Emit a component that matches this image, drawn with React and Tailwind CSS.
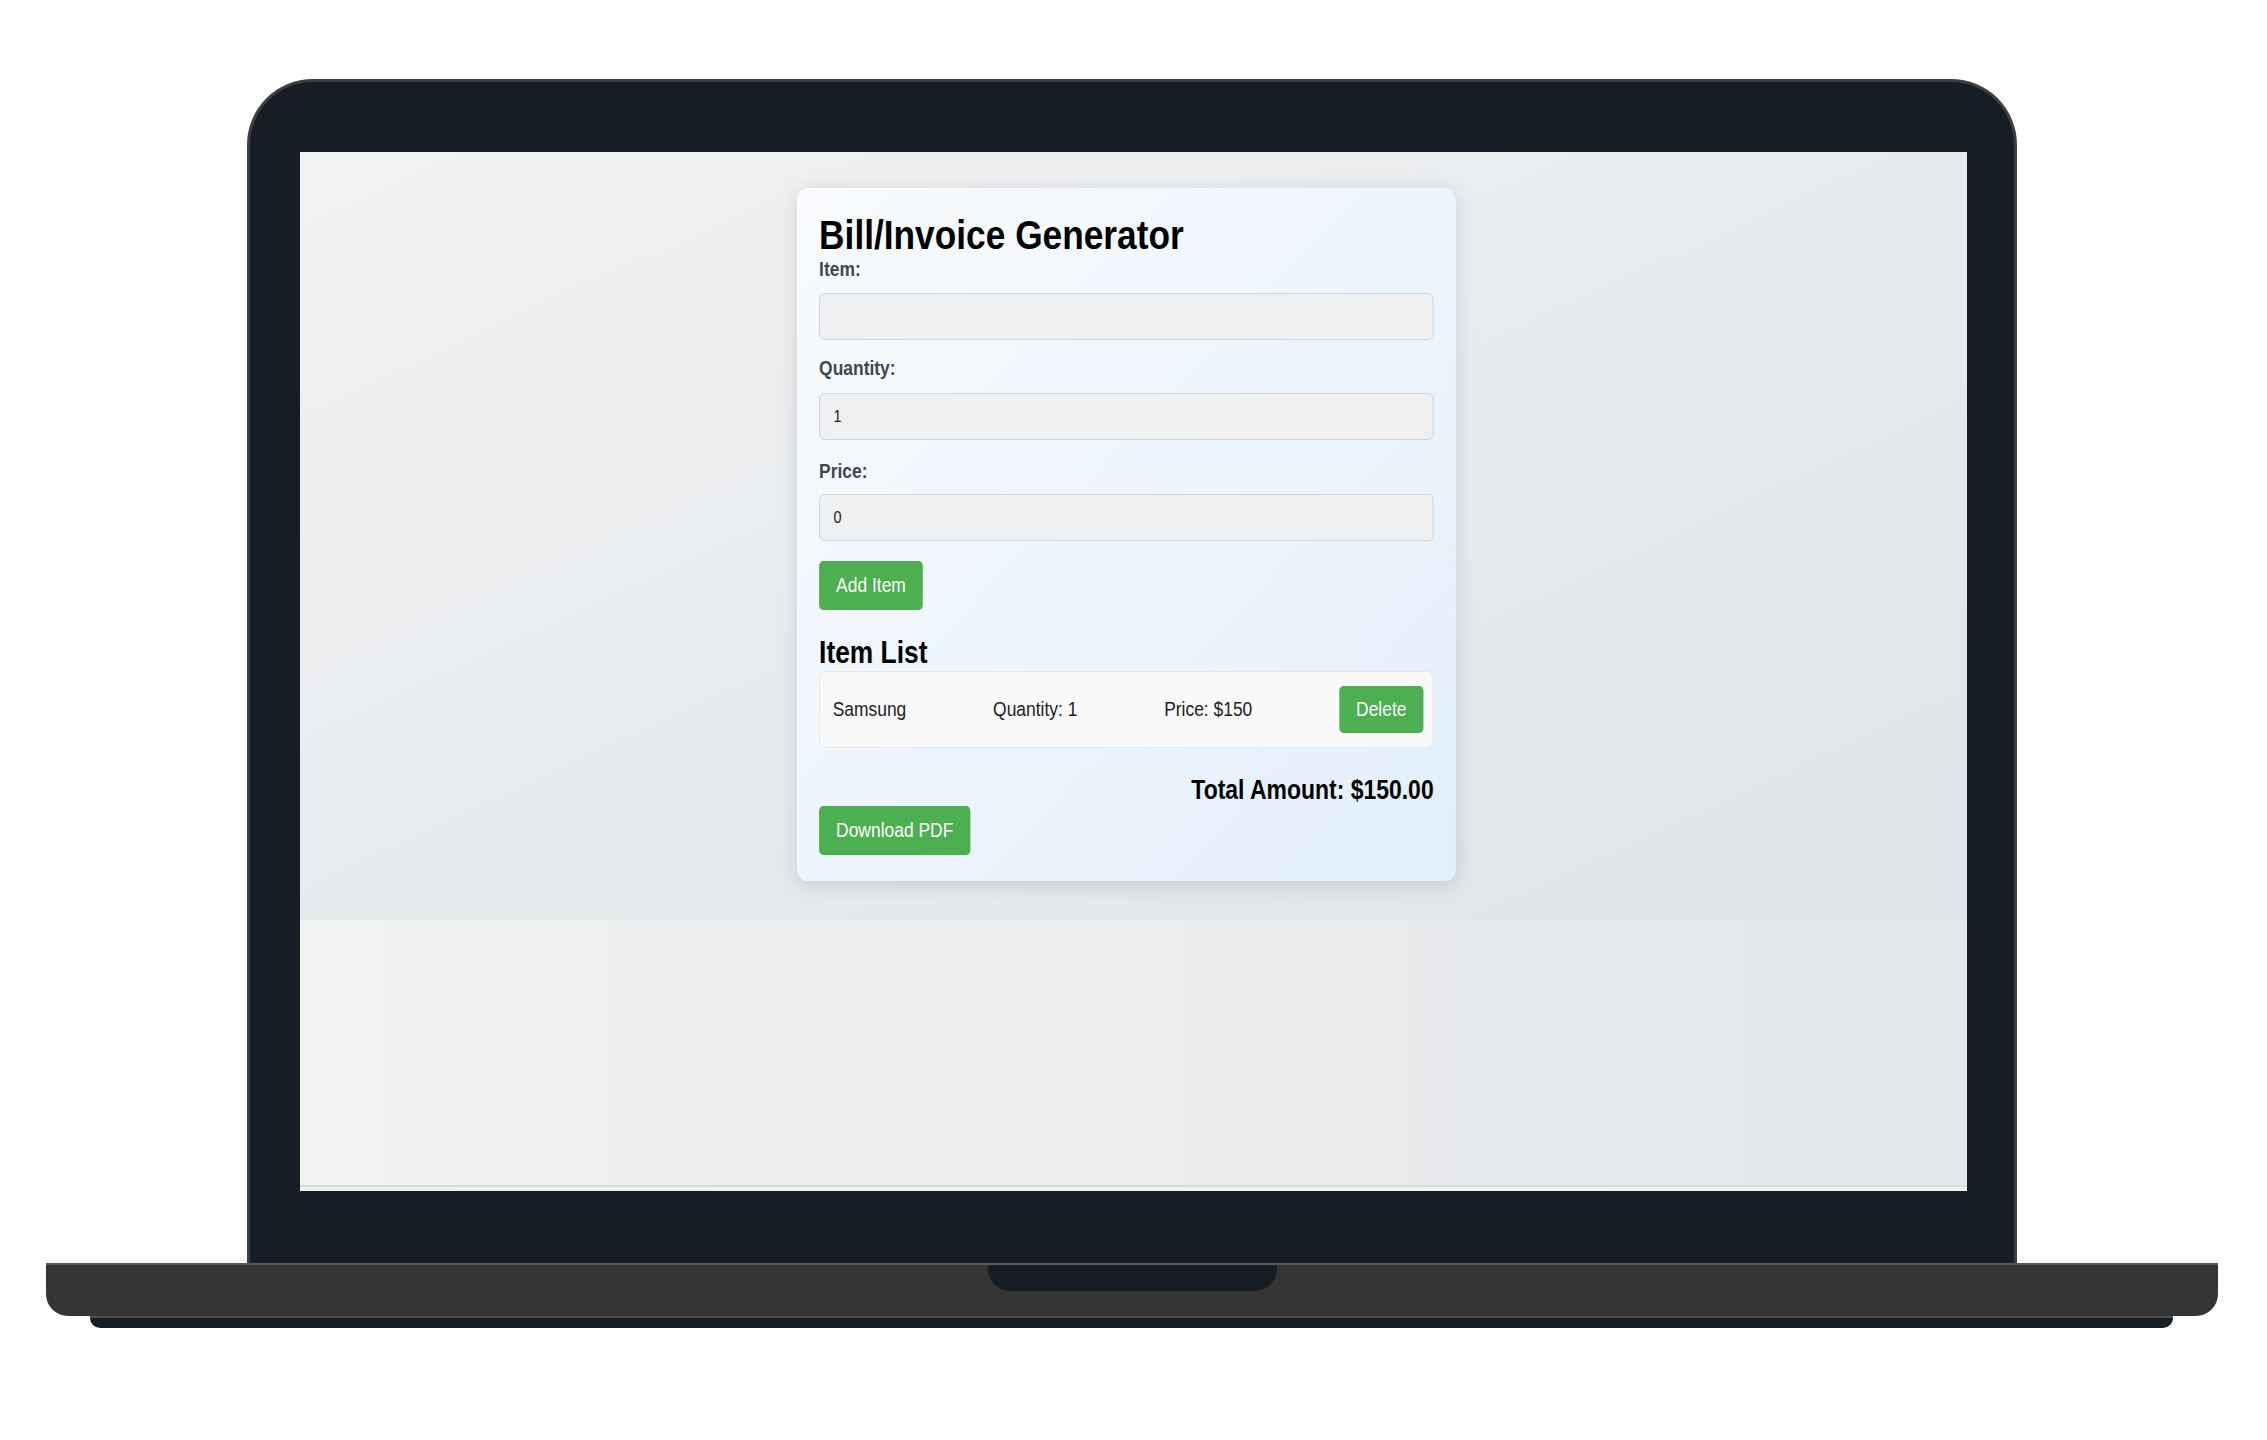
import React from "react";

const items = [{ name: "Samsung", quantity: 1, price: 150 }];

const Field = ({ label, value, labelGap, inputGap }) => (
  <div>
    <label
      className={`block text-[20.5px] leading-[24px] font-bold text-[#3f4753] ${labelGap}`}
    >
      {label}
    </label>
    <input
      readOnly
      value={value}
      className={`${inputGap} block w-full h-[47px] rounded-[6px] border-[1.5px] border-[#cdd2d6] bg-[#eef0f1] pl-[16px] text-[17px] text-[#222] outline-none font-['Liberation_Sans',Arial,sans-serif]`}
    />
  </div>
);

const GreenButton = ({ children, className = "" }) => (
  <button
    className={`h-[49px] px-5 rounded-[5px] bg-[#4caf50] text-white text-[20.5px] leading-none ${className}`}
  >
    {children}
  </button>
);

const InvoiceCard = () => {
  const total = items.reduce((sum, i) => sum + i.quantity * i.price, 0);

  return (
    <div className="ml-[497px] w-[775px] scale-x-[0.85] origin-left rounded-[12px] bg-linear-to-br from-[#f9fbfd] to-[#e2effb] px-[26px] pt-[26px] pb-[26px] shadow-[0_4px_22px_rgba(0,0,0,0.13)] font-['Liberation_Sans',Arial,sans-serif]">
      <h1 className="text-[41.5px] leading-[41px] font-bold text-black">
        Bill/Invoice Generator
      </h1>
      <Field label="Item:" value="" labelGap="mt-[2px]" inputGap="mt-[12px]" />
      <Field label="Quantity:" value="1" labelGap="mt-[16px]" inputGap="mt-[13px]" />
      <Field label="Price:" value="0" labelGap="mt-[19px]" inputGap="mt-[11px]" />
      <GreenButton className="mt-[20px]">Add Item</GreenButton>

      <h2 className="mt-[27px] text-[31px] leading-[31px] font-bold text-black">
        Item List
      </h2>
      {items.map((item) => (
        <div
          key={item.name}
          className="mt-[3px] h-[77px] flex items-center justify-between rounded-[8px] border-[1.5px] border-[#e2e4e6] bg-[#f9f9f9] pl-[15px] pr-[11px] text-[20.5px] text-[#222]"
        >
          <span>{item.name}</span>
          <span>Quantity: {item.quantity}</span>
          <span>Price: ${item.price}</span>
          <button className="h-[47px] px-5 rounded-[5px] bg-[#4caf50] text-white text-[20.5px] leading-none">
            Delete
          </button>
        </div>
      ))}

      <div className="mt-[29px] text-right text-[27px] leading-[27px] font-bold text-black">
        Total Amount: ${total.toFixed(2)}
      </div>
      <GreenButton className="mt-[2px]">Download PDF</GreenButton>
    </div>
  );
};

const App = () => {
  return (
    <div className="w-[2267px] h-[1440px] bg-white pt-[79px] overflow-hidden">
      {/* lid */}
      <div className="ml-[247px] w-[1770px] h-[1184px] rounded-t-[66px] border-[3px] border-b-0 border-[#3e3e3e] bg-[#171d24] pt-[70px] px-[50px]">
        <div className="w-[1667px] h-[1039px] flex flex-col">
          <div className="h-[768px] pt-[36px] bg-linear-to-br from-[#f1f2f3] to-[#dfe4e8]">
            <InvoiceCard />
          </div>
          <div className="h-[265px] bg-linear-to-r from-[#f1f2f2] to-[#e4e7ea]" />
          <div className="h-[6px] border-t-2 border-[#d9dadb] bg-[#f0f1f1]" />
        </div>
      </div>

      {/* base */}
      <div className="ml-[46px] w-[2172px] h-[53px] rounded-b-[22px] border-t-2 border-[#575b5f] bg-[#353535]">
        <div className="mx-auto w-[289px] h-[26px] rounded-b-[22px] bg-[#171d24]" />
      </div>
      <div className="ml-[90px] w-[2083px] h-[12px] rounded-b-[10px] border-t-[2px] border-[#4d4f52] bg-[#171d24]" />
    </div>
  );
};

export default App;
